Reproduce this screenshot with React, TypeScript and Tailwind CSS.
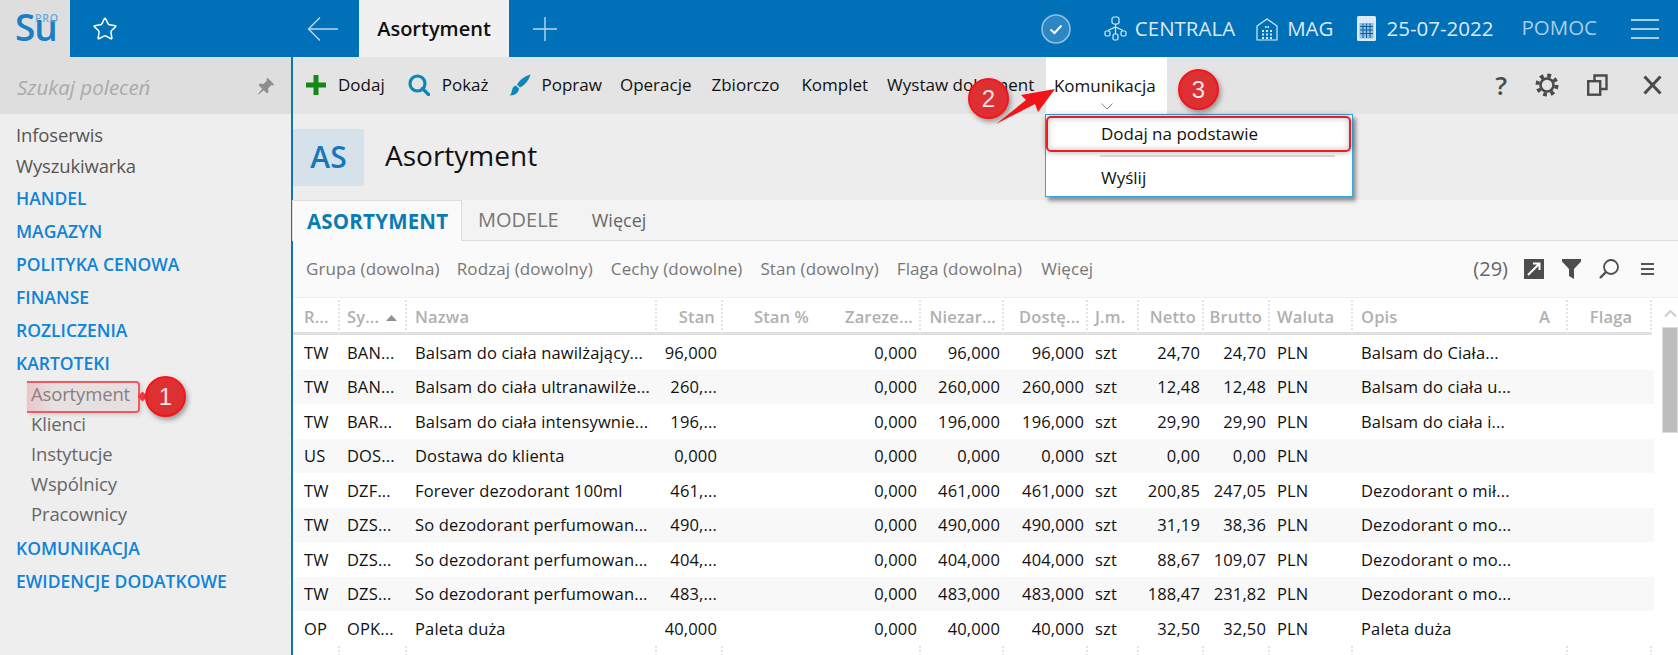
import React from "react";
import { Star } from "lucide-react";

const cols = [
  { w: "w-[47px]", h: "R...", a: "l", pl: "pl-[11px]" },
  { w: "w-[67px]", h: "Sy...", a: "l", pl: "pl-[7px]" },
  { w: "w-[250px]", h: "Nazwa", a: "l", pl: "pl-[8px]" },
  { w: "w-[66px]", h: "Stan", a: "r", pl: "" },
  { w: "w-[92px]", h: "Stan %", a: "r", pl: "" },
  { w: "w-[106px]", h: "Zareze...", a: "r", pl: "" },
  { w: "w-[83px]", h: "Niezar...", a: "r", pl: "" },
  { w: "w-[84px]", h: "Dostę...", a: "r", pl: "" },
  { w: "w-[51px]", h: "J.m.", a: "l", pl: "pl-[7px]" },
  { w: "w-[65px]", h: "Netto", a: "r", pl: "" },
  { w: "w-[66px]", h: "Brutto", a: "r", pl: "" },
  { w: "w-[83px]", h: "Waluta", a: "l", pl: "pl-[7px]" },
  { w: "w-[215px]", h: "Opis", a: "l", pl: "pl-[8px]" },
  { w: "w-[84px]", h: "Flaga", a: "c", pl: "pl-[4px]" },
];

const rows = [
  ["TW", "BAN...", "Balsam do ciała nawilżający...", "96,000", "", "0,000", "96,000", "96,000", "szt", "24,70", "24,70", "PLN", "Balsam do Ciała...", ""],
  ["TW", "BAN...", "Balsam do ciała ultranawilże...", "260,...", "", "0,000", "260,000", "260,000", "szt", "12,48", "12,48", "PLN", "Balsam do ciała u...", ""],
  ["TW", "BAR...", "Balsam do ciała intensywnie...", "196,...", "", "0,000", "196,000", "196,000", "szt", "29,90", "29,90", "PLN", "Balsam do ciała i...", ""],
  ["US", "DOS...", "Dostawa do klienta", "0,000", "", "0,000", "0,000", "0,000", "szt", "0,00", "0,00", "PLN", "", ""],
  ["TW", "DZF...", "Forever dezodorant 100ml", "461,...", "", "0,000", "461,000", "461,000", "szt", "200,85", "247,05", "PLN", "Dezodorant o mił...", ""],
  ["TW", "DZS...", "So dezodorant perfumowan...", "490,...", "", "0,000", "490,000", "490,000", "szt", "31,19", "38,36", "PLN", "Dezodorant o mo...", ""],
  ["TW", "DZS...", "So dezodorant perfumowan...", "404,...", "", "0,000", "404,000", "404,000", "szt", "88,67", "109,07", "PLN", "Dezodorant o mo...", ""],
  ["TW", "DZS...", "So dezodorant perfumowan...", "483,...", "", "0,000", "483,000", "483,000", "szt", "188,47", "231,82", "PLN", "Dezodorant o mo...", ""],
  ["OP", "OPK...", "Paleta duża", "40,000", "", "0,000", "40,000", "40,000", "szt", "32,50", "32,50", "PLN", "Paleta duża", ""],
];

function Badge({ n, className }: { n: string; className: string }) {
  return (
    <div
      className={
        "absolute w-[41px] h-[41px] rounded-full bg-[#dd3033] border-2 border-[#f5141a] shadow-[2px_3px_5px_rgba(0,0,0,0.35)] flex items-center justify-center text-[#f6e6e6] text-[24px] font-['Liberation_Sans',sans-serif] " +
        className
      }
    >
      {n}
    </div>
  );
}

function SideHead({ t }: { t: string }) {
  return <div className="h-[33px] flex items-center text-[#0f83d8] font-semibold text-[17.5px] tracking-normal">{t}</div>;
}
function SideSub({ t }: { t: string }) {
  return <div className="h-[30px] flex items-center pl-[15px] pb-[2px] text-[#666666]">{t}</div>;
}

function ToolText({ t, className = "" }: { t: string; className?: string }) {
  return <span className={"text-[#111111] text-[17px] whitespace-nowrap " + className}>{t}</span>;
}

export default function App() {
  return (
    <div className="relative w-[1678px] h-[655px] overflow-hidden bg-[#eeeeee] font-['Open_Sans','Noto_Sans',sans-serif]">
      {/* top bar */}
      <header className="h-[57px] flex bg-[#0070b8] text-[#dbeaf6]">
        <div className="w-[70px] h-full bg-[#dedede] relative shrink-0">
          <span className="absolute left-[15px] top-[4px] text-[37px] leading-[46px] font-semibold text-[#1a7fc4] tracking-[-1px]">Su</span>
          <span className="absolute left-[35px] top-[12px] text-[10.5px] leading-[12px] font-semibold text-[#6aa8d6] tracking-[0.8px]">PRO</span>
        </div>
        <div className="w-[69px] flex items-center justify-center shrink-0">
          <Star size={26} strokeWidth={1.4} color="#ffffff" />
        </div>
        <div className="w-[200px] flex items-center justify-end shrink-0">
          <svg width="32" height="26" viewBox="0 0 32 26" fill="none" stroke="#b9d6ec" strokeWidth="1.4"><path d="M31 13H2M13 1.5 1.5 13 13 24.5" /></svg>
        </div>
        <div className="ml-[20px] w-[150px] shrink-0 bg-[#f0f0f0] flex items-center justify-center text-[#111111] text-[20px] font-semibold">Asortyment</div>
        <div className="ml-[24px] flex items-center shrink-0">
          <svg width="24" height="24" viewBox="0 0 24 24" stroke="#b9d6ec" strokeWidth="1.4"><path d="M12 0v24M0 12h24" /></svg>
        </div>
        <div className="ml-auto flex items-center pr-[19px]">
          <svg width="30" height="30" viewBox="0 0 30 30" fill="none"><circle cx="15" cy="15" r="14" fill="#2d86c4" stroke="#8fc0e2" strokeWidth="1.6" /><path d="M9.5 15.5 13.5 19l7-7.5" stroke="#ffffff" strokeWidth="2" /></svg>
          <svg className="ml-[33px]" width="23" height="25" viewBox="0 0 23 25" fill="none" stroke="#dbeaf6" strokeWidth="1.2"><rect x="8" y="1" width="7" height="7" rx="2" /><path d="M11.500 8v10M4 14.500 11.500 11 19 14.500" /><rect x="1" y="15" width="5" height="5" rx="1.500" /><rect x="9" y="18" width="5" height="6" rx="1.500" /><rect x="17" y="15" width="5" height="5" rx="1.500" /></svg>
          <span className="ml-[8px] text-[20.5px]">CENTRALA</span>
          <svg className="ml-[21px]" width="22" height="24" viewBox="0 0 22 24" fill="none" stroke="#dbeaf6" strokeWidth="1.2"><path d="M1 23V9l10-7 10 7v14z" /><path d="M9 10h1.500M11.500 10H13M6 14h2M10 14h2M14 14h2M6 17.500h2M10 17.500h2M14 17.500h2M6 21h2M10 21h2M14 21h2" strokeWidth="2" /></svg>
          <span className="ml-[9px] text-[20.5px]">MAG</span>
          <svg className="ml-[24px]" width="19" height="25" viewBox="0 0 19 25"><rect width="19" height="25" rx="1.500" fill="#dbeaf6" /><rect x="2.500" y="7" width="14" height="15.500" fill="#8fbfe0" /><path d="M3 10.500h13M3 14h13M3 17.500h13M6 7.500v14.500M9.500 7.500v14.500M13 7.500v14.500" stroke="#0a5f9e" strokeWidth="1" /></svg>
          <span className="ml-[10px] text-[20.5px]">25-07-2022</span>
          <span className="ml-[28px] text-[20.5px] text-[#a9cde8] -mt-[2px]">POMOC</span>
          <div className="ml-[34px] w-[28px] flex flex-col gap-[7px]">
            <div className="h-[2px] bg-[#a9cde8]" />
            <div className="h-[2px] bg-[#a9cde8]" />
            <div className="h-[2px] bg-[#a9cde8]" />
          </div>
        </div>
      </header>

      <div className="flex h-[598px]">
        {/* sidebar */}
        <aside className="w-[291px] shrink-0 bg-[#eeeeee]">
          <div className="h-[57px] bg-[#dedede] flex items-center justify-between pl-[17px] pr-[16px]">
            <span className="italic text-[#aaaaaa] text-[20.5px] pt-[3px]">Szukaj poleceń</span>
            <svg width="18" height="18" viewBox="0 0 18 18" fill="#8e8e8e"><path d="M10.500 0.800 17.200 7.500 15.700 8.500 14.500 8 11 11.500 11.500 15 10 16.500 6.700 13.200 1.500 17.500 1 17 5.200 11.800 1.500 8 3 6.500 6.500 7 10 3.500 9.500 2.300z" /></svg>
          </div>
          <nav className="pl-[16px] pt-[6px] text-[18.5px] tracking-[-0.15px] leading-none">
            <div className="h-[31px] flex items-center text-[#555555]">Infoserwis</div>
            <div className="h-[31px] flex items-center text-[#555555]">Wyszukiwarka</div>
            <SideHead t="HANDEL" />
            <SideHead t="MAGAZYN" />
            <SideHead t="POLITYKA CENOWA" />
            <SideHead t="FINANSE" />
            <SideHead t="ROZLICZENIA" />
            <SideHead t="KARTOTEKI" />
            <SideSub t="Asortyment" />
            <SideSub t="Klienci" />
            <SideSub t="Instytucje" />
            <SideSub t="Wspólnicy" />
            <SideSub t="Pracownicy" />
            <div className="h-[2px]" />
            <SideHead t="KOMUNIKACJA" />
            <SideHead t="EWIDENCJE DODATKOWE" />
          </nav>
        </aside>

        {/* main */}
        <main className="flex-1 border-l-2 border-[#0f75bb] min-w-0 bg-[#ededed]">
          {/* toolbar */}
          <div className="h-[57px] bg-[#e4e4e4] flex items-center pl-[13px] pr-[16px] pb-[1px]">
            <svg width="20" height="20" viewBox="0 0 20 20" fill="#138a17"><path d="M7.500 0h5v7.500H20v5h-7.500V20h-5v-7.500H0v-5h7.500z" /></svg>
            <ToolText t="Dodaj" className="ml-[12px]" />
            <svg className="ml-[23px]" width="22" height="22" viewBox="0 0 22 22" fill="none" stroke="#0f86b8" strokeWidth="3.200"><circle cx="9.500" cy="9.500" r="7.500" /><path d="M14.500 14.500 20.500 20.500" strokeLinecap="round" /></svg>
            <ToolText t="Pokaż" className="ml-[12px]" />
            <svg className="ml-[20px]" width="22" height="22" viewBox="0 0 22 22" fill="#0f86b8"><path d="M21.500 0.500C20 6 16 11 11 13.500L8 10.500C11 5.500 16 2 21.500 0.500z" /><path d="M7 11.500 10 14.500C10 18 7 21.500 0.500 21.500 3 19.500 2.500 17 3.500 14.500 4 13 5.500 11.800 7 11.500z" /></svg>
            <ToolText t="Popraw" className="ml-[11px]" />
            <ToolText t="Operacje" className="ml-[18px]" />
            <ToolText t="Zbiorczo" className="ml-[20px]" />
            <ToolText t="Komplet" className="ml-[22px]" />
            <ToolText t="Wystaw dokument" className="ml-[19px]" />
            <div className="ml-[12px] w-[121px] h-[57px] -mb-[1px] pr-[4px] bg-[#ffffff] flex items-center justify-center shrink-0 relative">
              <ToolText t="Komunikacja" />
              <svg className="absolute left-[55px] top-[46px]" width="12" height="7" viewBox="0 0 12 7" fill="none" stroke="#888888" strokeWidth="1"><path d="M0.500 0.500 6 6 11.500 0.500" /></svg>
            </div>
            <div className="ml-auto flex items-center">
              <span className="text-[#4a4a4a] text-[26px] font-semibold leading-none">?</span>
              <svg className="ml-[28px]" width="24" height="24" viewBox="0 0 24 24" fill="none" stroke="#4a4a4a"><circle cx="12" cy="12" r="9.500" strokeWidth="4" strokeDasharray="3.730 3.730" /><circle cx="12" cy="12" r="6.500" strokeWidth="2.600" /></svg>
              <svg className="ml-[28px]" width="21" height="22" viewBox="0 0 21 22" fill="none" stroke="#4a4a4a" strokeWidth="2.400"><rect x="1.200" y="7.200" width="12" height="13.500" /><path d="M7.500 6V1.500H19.500V15H14" /></svg>
              <svg className="ml-[35px]" width="19" height="20" viewBox="0 0 19 20" stroke="#4a4a4a" strokeWidth="3"><path d="M1.500 1.500 17.500 18.500M17.500 1.500 1.500 18.500" /></svg>
            </div>
          </div>

          {/* title */}
          <div className="h-[86px] pt-[15px] flex items-start">
            <div className="w-[71px] h-[57px] pb-[3px] bg-[#d6e1e9] flex items-center justify-center text-[#1479bb] text-[30px] font-semibold">AS</div>
            <h1 className="ml-[21px] h-[57px] pb-[6px] flex items-center text-[28px] font-normal text-[#111111]">Asortyment</h1>
          </div>

          {/* tabs */}
          <div className="h-[41px] bg-[#f3f3f3] border-b border-[#dddddd] flex items-stretch">
            <div className="w-[170px] -ml-[1px] h-[41px] border border-[#dddddd] border-b-0 bg-[#fafafa] flex items-center pl-[14px] text-[#0b7cb3] font-bold text-[20.5px] tracking-[0.2px]">ASORTYMENT</div>
            <span className="ml-[16px] self-center text-[#777777] text-[20px]">MODELE</span>
            <span className="ml-[33px] self-center text-[#666666] text-[18px]">Więcej</span>
          </div>

          {/* filters */}
          <div className="h-[56px] bg-[#fafafa] flex items-center pl-[13px] pr-[24px] text-[#777777] text-[17px] tracking-[0.1px] whitespace-nowrap">
            <span>Grupa (dowolna)</span>
            <span className="ml-[17px]">Rodzaj (dowolny)</span>
            <span className="ml-[18px]">Cechy (dowolne)</span>
            <span className="ml-[18px]">Stan (dowolny)</span>
            <span className="ml-[18px]">Flaga (dowolna)</span>
            <span className="ml-[19px]">Więcej</span>
            <div className="ml-auto flex items-center">
              <span className="text-[#666666] text-[20px] tracking-normal">(29)</span>
              <svg className="ml-[16px]" width="20" height="20" viewBox="0 0 20 20"><rect width="20" height="20" fill="#4d4d4d" /><path d="M4 16 15 5M9 4.500h6.500V11" stroke="#ffffff" strokeWidth="2" fill="none" /></svg>
              <svg className="ml-[18px]" width="19" height="20" viewBox="0 0 19 20" fill="#4d4d4d"><path d="M0 0H19V2.500L12 10V20L7 17V10L0 2.500z" /></svg>
              <svg className="ml-[18px]" width="20" height="20" viewBox="0 0 20 20" fill="none" stroke="#4d4d4d" strokeWidth="1.800"><circle cx="12" cy="8" r="7" /><path d="M7 13 1 19" strokeWidth="2.400" /></svg>
              <div className="ml-[22px] w-[13px] flex flex-col gap-[3px]">
                <div className="h-[2px] bg-[#555555]" />
                <div className="h-[2px] bg-[#555555]" />
                <div className="h-[2px] bg-[#555555]" />
              </div>
            </div>
          </div>

          {/* table */}
          <div className="flex bg-[#ffffff] border-t border-[#eeeeee]">
            <div className="w-[1361px] shrink-0 text-[16.5px] tracking-[0.15px]">
              <div className="flex h-[37px]">
                {cols.map((c, i) => (
                  <div
                    key={i}
                    className={
                      c.w +
                      " relative shrink-0 flex items-center pt-[5px] border-b-[3px] border-b-[#dfdfdf] font-semibold text-[#b0b0b0] " +
                      (i === 4 ? "" : "border-r-2 border-r-[#ffffff] ") +
                      (c.a === "r" ? "justify-end pr-[6px] " : c.a === "c" ? "justify-center " : "") +
                      c.pl
                    }
                  >
                    {c.h === "Sy..." ? (
                      <>
                        <span>Sy...</span>
                        <svg className="ml-[7px]" width="11" height="6" viewBox="0 0 11 6" fill="#909090"><path d="M5.500 0 11 6H0z" /></svg>
                      </>
                    ) : c.h === "Opis" ? (
                      <div className="flex-1 flex justify-between pr-[16px]">
                        <span>Opis</span>
                        <span>A</span>
                      </div>
                    ) : (
                      c.h
                    )}
                    {i !== 4 && <div className="absolute right-[-2px] top-[2px] bottom-[-2px] border-r-2 border-dotted border-[#e2e2e2]" />}
                  </div>
                ))}
              </div>
              {rows.map((r, ri) => (
                <div key={ri} className={"flex h-[34.5px] items-center pt-[2px] text-[#111111] " + (ri % 2 === 1 ? "bg-[#f8f8f8]" : "bg-[#ffffff]")}>
                  {r.map((v, i) => (
                    <div
                      key={i}
                      className={
                        cols[i].w +
                        " shrink-0 whitespace-nowrap " +
                        (i === 3 ? "text-right pr-[6px] " : cols[i].a === "r" ? "text-right pr-[4px] " : "") +
                        (i === 0 ? "pl-[11px] " : cols[i].pl)
                      }
                    >
                      {v}
                    </div>
                  ))}
                </div>
              ))}
              <div className="h-[10px] flex">
                {cols.map((c, i) => (
                  <div key={i} className={c.w + " shrink-0 " + (i === 4 ? "" : "border-r-2 border-dotted border-[#e2e2e2]")} />
                ))}
              </div>
            </div>
            <div className="ml-[8px] w-[16px] shrink-0 relative">
              <svg className="absolute left-[2px] top-[12px]" width="13" height="7" viewBox="0 0 13 7" fill="none" stroke="#cccccc" strokeWidth="2"><path d="M1 6.500 6.500 1 12 6.500" /></svg>
              <div className="mt-[29px] h-[106px] bg-[#bdbdbd] border border-[#dddddd]" />
            </div>
          </div>
        </main>
      </div>

      {/* dropdown */}
      <div className="absolute left-[1045px] top-[114px] w-[308px] h-[83px] bg-[#ffffff] border border-[#3aa6e0] shadow-[3px_4px_4px_rgba(0,0,0,0.4)] text-[17px] text-[#111111]">
        <div className="h-[38px] flex items-center pl-[55px]">Dodaj na podstawie</div>
        <div className="ml-[54px] mr-[17px] mt-[2px] h-[2px] bg-[#dddddd]" />
        <div className="h-[42px] flex items-center pl-[55px]">Wyślij</div>
      </div>
      <div className="absolute left-[1046px] top-[116px] w-[305px] h-[36px] rounded-[5px] border-2 border-[#ec1c24] shadow-[0_0_6px_rgba(0,0,0,0.35),inset_0_0_6px_rgba(0,0,0,0.25)]" />

      {/* annotations */}
      <div className="absolute left-[27px] top-[381px] w-[113px] h-[32px] rounded-r-[4px] border-2 border-l-0 border-[#ee5a5e] bg-[linear-gradient(90deg,rgba(226,150,155,0.45),rgba(214,190,192,0.28)_25%,rgba(214,190,192,0.3))] shadow-[2px_2px_4px_rgba(0,0,0,0.12)]" />
      <div className="absolute left-[139px] top-[393px] w-[7px] h-[7px] rotate-45 bg-[#ee3a3e]" />
      <Badge n="1" className="left-[145px] top-[376px]" />
      <Badge n="2" className="left-[968px] top-[78px]" />
      <Badge n="3" className="left-[1178px] top-[69px]" />
      <svg className="absolute left-[994px] top-[86px]" width="64" height="42" viewBox="0 0 64 42" fill="#f3141a"><path d="M61 3 44 26 41 18 2 38 32 14 27 9z" /></svg>
    </div>
  );
}
